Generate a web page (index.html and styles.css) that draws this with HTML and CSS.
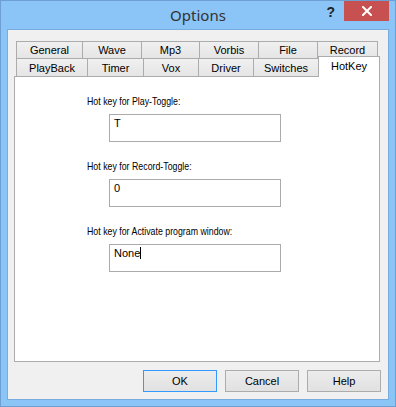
FILE: index.html
```html
<!DOCTYPE html>
<html>
<head>
<meta charset="utf-8">
<link rel="stylesheet" href="styles.css">
</head>
<body>
<div class="window">
  <div class="titlebar">
    <div></div>
    <div class="title">Options</div>
    <div class="caption-btns">
      <span class="help-q">?</span>
      <span class="close">
        <svg width="10" height="10" viewBox="0 0 10 10"><path d="M1 1 L9 9 M9 1 L1 9" stroke="#fff" stroke-width="2" stroke-linecap="square"/></svg>
      </span>
    </div>
  </div>
  <div class="client">
    <div class="tabs">
      <div class="tabrow row1">
        <div class="tab w1">General</div>
        <div class="tab w2">Wave</div>
        <div class="tab w3">Mp3</div>
        <div class="tab w4">Vorbis</div>
        <div class="tab w5">File</div>
        <div class="tab w6">Record</div>
      </div>
      <div class="tabrow row2">
        <div class="tab v1">PlayBack</div>
        <div class="tab v2">Timer</div>
        <div class="tab v3">Vox</div>
        <div class="tab v4">Driver</div>
        <div class="tab v5">Switches</div>
        <div class="tab v6 selected">HotKey</div>
      </div>
      <div class="panel">
        <div class="group">
          <div class="label">Hot key for Play-Toggle:</div>
          <div class="field">T</div>
        </div>
        <div class="group">
          <div class="label">Hot key for Record-Toggle:</div>
          <div class="field">0</div>
        </div>
        <div class="group">
          <div class="label">Hot key for Activate program window:</div>
          <div class="field"><span class="caret">None</span></div>
        </div>
      </div>
    </div>
    <div class="buttons">
      <div class="btn default">OK</div>
      <div class="btn">Cancel</div>
      <div class="btn">Help</div>
    </div>
  </div>
</div>
</body>
</html>
```
FILE: styles.css
```css
html, body {
  margin: 0;
  padding: 0;
  background: #ffffff;
}
.window {
  width: 396px;
  height: 407px;
  box-sizing: border-box;
  border: 1px solid #6d9fd2;
  background: #8bc4f6;
  padding: 0 7px 7px 7px;
  display: flex;
  flex-direction: column;
}
.titlebar {
  height: 29px;
  display: grid;
  grid-template-columns: 1fr auto 1fr;
  margin: 0 -7px;
}
.title {
  font-family: "Noto Sans", "Open Sans", sans-serif;
  font-size: 15px;
  line-height: 20px;
  padding-top: 4px;
  color: #333333;
}
.caption-btns {
  display: flex;
  justify-content: flex-end;
  align-items: flex-start;
  padding-right: 6px;
}
.help-q {
  font-family: "Liberation Sans", sans-serif;
  font-weight: bold;
  font-size: 14px;
  line-height: 16px;
  margin-top: 3px;
  margin-right: 9px;
  color: #222;
}
.close {
  width: 45px;
  height: 20px;
  background: #c75050;
  display: flex;
  align-items: center;
  justify-content: center;
}
.client {
  flex: 1;
  background: #f0f0f0;
  box-shadow: 0 0 0 1px #78acdf;
  display: flex;
  flex-direction: column;
  padding: 11px 0 0 6px;
  font-family: "Liberation Sans", Arial, sans-serif;
  font-size: 11px;
  color: #000;
}
.tabs {
  width: 366px;
  display: flex;
  flex-direction: column;
}
.tabrow {
  display: flex;
  padding-left: 2px;
  align-items: flex-start;
}
.row1 { height: 17px; }
.row2 { height: 18px; }
.tab {
  box-sizing: border-box;
  border: 1px solid #acacac;
  border-bottom: none;
  background: linear-gradient(#f0f0f0, #e5e5e5);
  text-align: center;
  line-height: 16px;
  margin-right: -1px;
}
.row1 .tab { height: 17px; }
.row2 .tab { height: 18px; padding-top: 1px; }
.w1 { width: 67px; }
.w2 { width: 60px; }
.w3 { width: 59px; }
.w4 { width: 60px; }
.w5 { width: 60px; }
.w6 { width: 61px; }
.v1 { width: 72px; }
.v2 { width: 57px; }
.v3 { width: 56px; }
.v4 { width: 56px; }
.v5 { width: 66px; }
.v6 { width: 62px; }
.tab.selected {
  position: relative;
  z-index: 1;
  background: #ffffff;
  height: 21px;
  margin-top: -2px;
  padding-top: 1px;
}
.panel {
  box-sizing: border-box;
  height: 286px;
  border: 1px solid #acacac;
  background: #ffffff;
  padding: 18px 0 0 72px;
  display: flex;
  flex-direction: column;
  gap: 18px;
}
.group {
  display: flex;
  flex-direction: column;
  align-items: flex-start;
  gap: 6px;
}
.label {
  font-family: "Liberation Sans", Arial, sans-serif;
  font-size: 11px;
  line-height: 13px;
  white-space: nowrap;
  transform: scaleX(0.8);
  transform-origin: left center;
}
.field {
  box-sizing: border-box;
  margin-left: 22px;
  width: 172px;
  height: 28px;
  border: 1px solid #ababab;
  padding: 2px 0 0 4px;
  line-height: 13px;
  font-size: 11px;
}
.caret {
  border-right: 1px solid #000;
}
.buttons {
  display: flex;
  justify-content: flex-end;
  gap: 8px;
  padding-right: 7px;
  margin-top: 8px;
}
.btn {
  box-sizing: border-box;
  width: 74px;
  height: 22px;
  border: 1px solid #acacac;
  background: linear-gradient(#ececec, #e1e1e1);
  text-align: center;
  line-height: 20px;
  font-size: 11px;
}
.btn.default {
  border-color: #3399ff;
}
```
